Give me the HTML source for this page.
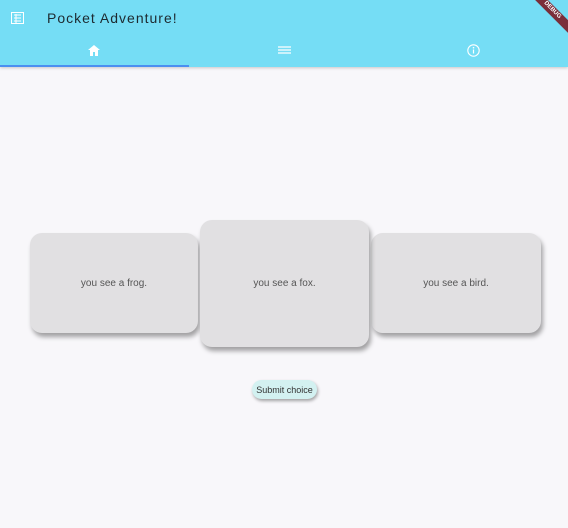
<!DOCTYPE html>
<html><head><style>
body{margin:0;width:568px;height:528px;background:#f8f7fa;font-family:"Liberation Sans",sans-serif;position:relative;overflow:hidden}
.bar{position:absolute;left:0;top:0;width:568px;height:67px;background:#75ddf5;box-shadow:0 1px 3px rgba(0,0,0,.2)}
.title{position:absolute;left:47px;top:10px;font-size:14px;letter-spacing:1px;color:#1d2a30}
.ind{position:absolute;left:0;top:65px;width:189px;height:2px;background:#4a8ff0}
.card{position:absolute;background:#e1e0e2;border-radius:12px;box-shadow:2px 4px 5px rgba(0,0,0,.35);font-size:10px;color:#555;display:flex;align-items:center;justify-content:center}
.btn{position:absolute;left:252px;top:380px;width:65px;height:19px;border-radius:10px;background:#d3f1f1;box-shadow:1px 2px 3px rgba(0,0,0,.35);font-size:9px;color:#333;display:flex;align-items:center;justify-content:center}
.rib{position:absolute;right:-14px;top:6px;width:60px;height:9px;background:#7a2e3a;transform:rotate(45deg);color:#fff;font-size:6px;font-weight:bold;text-align:center;line-height:9px}
</style></head><body>
<div class="bar">
<svg style="position:absolute;left:11px;top:12px" width="13" height="12" viewBox="0 0 13 12"><rect x="0.5" y="0.5" width="12" height="11" fill="none" stroke="#fff"/><path d="M3 3h7M3 6h7M3 9h7M5 2v9" stroke="#fff" stroke-width="1"/></svg>
<div class="title">Pocket Adventure!</div>
<svg style="position:absolute;left:88px;top:45px" width="12" height="11" viewBox="0 0 12 11"><path d="M6 0L0 5h2v6h3V7h2v4h3V5h2z" fill="#fff"/></svg>
<svg style="position:absolute;left:278px;top:46px" width="13" height="9" viewBox="0 0 13 9"><path d="M0 1h13M0 4h13M0 7h13" stroke="#fff" stroke-width="1.3"/></svg>
<svg style="position:absolute;left:467px;top:44px" width="13" height="13" viewBox="0 0 13 13"><circle cx="6.5" cy="6.5" r="5.7" fill="none" stroke="#fff" stroke-width="1.1"/><path d="M6.5 5.5v4" stroke="#fff" stroke-width="1.2"/><circle cx="6.5" cy="3.7" r=".8" fill="#fff"/></svg>
<div class="ind"></div>
<div class="rib">DEBUG</div>
</div>
<div class="card" style="left:30px;top:233px;width:168px;height:100px">you see a frog.</div>
<div class="card" style="left:371px;top:233px;width:170px;height:100px">you see a bird.</div>
<div class="card" style="left:200px;top:220px;width:169px;height:127px">you see a fox.</div>
<div class="btn">Submit choice</div>
</body></html>
